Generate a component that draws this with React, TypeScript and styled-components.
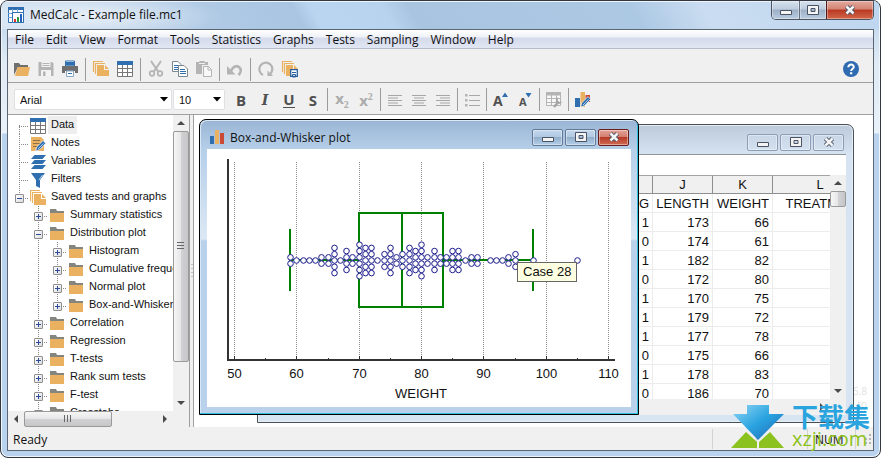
import React from 'react';
import styled, { createGlobalStyle, css } from 'styled-components';

const UI = '"Open Sans", "Noto Sans", sans-serif';
const SANS = '"Liberation Sans", Arial, sans-serif';
const ORANGE = '#eab161';
const BLUE = '#2f6fb0';
const DARK = '#6f6f6f';
const FAINT = '#b4b4b4';

const GlobalStyle = createGlobalStyle`
  *, *::before, *::after { box-sizing: border-box; }
  body { margin: 0; background: #fff; font: 12px/16px ${UI}; color: #111; }
  button, select { font: inherit; color: inherit; }
  button { border: 0; padding: 0; background: none; }
`;

/* ---------- main frame ---------- */

const Frame = styled.div`
  position: relative;
  display: flex;
  flex-direction: column;
  height: 100vh;
  min-height: 400px;
  padding: 0 6px 6px;
  overflow: hidden;
  border: 1px solid #33373f;
  border-radius: 8px;
  box-shadow: inset 0 0 0 1px #eef5fb;
  background: linear-gradient(to bottom, #b5d0ea 0, #dfeaf5 60px, #e9f1f9 132px, #b9d3ee 133px, #b9d3ee 100%);
`;

const TitleBar = styled.header`
  display: flex;
  align-items: flex-start;
  justify-content: space-between;
  height: 28px;
  flex: none;
  margin: 0 -5px;
  padding: 0 5px 0 6px;
  border-top: 1px solid #eef5fb;
  background:
    radial-gradient(ellipse 130px 22px at 90px 14px, rgba(255, 255, 255, 0.6), rgba(255, 255, 255, 0) 100%),
    linear-gradient(60deg, #d3e2f2 0, #b0cae5 24%, #a9c5e2 34%, #b9d5f0 36%, #b7d3ee 44%, #a9c4e0 47%, #acc9e4 72%, #cadcf1 80%, #bdd6ef 100%);
`;

const AppTitle = styled.h1`
  display: flex;
  align-items: center;
  gap: 6px;
  margin: 0;
  padding-top: 4px;
  font: 12px/18px ${UI};
`;

const Controls = styled.div`
  display: flex;
  height: 19px;
  margin: -1px 0 0;
  overflow: hidden;
  border: 1px solid #4c545f;
  border-top: 0;
  border-radius: 0 0 5px 5px;
`;

const ControlButton = styled.button<{ $close?: boolean }>`
  display: grid;
  place-items: center;
  width: ${p => (p.$close ? 47 : 27)}px;
  border-left: ${p => (p.$close ? '1px solid #4c1a18' : '1px solid #66707f')};
  background: ${p =>
    p.$close
      ? 'linear-gradient(#e2aaa0 0, #d48373 45%, #b93822 50%, #d2674a 100%)'
      : 'linear-gradient(#d8e2ee 0, #bccbdd 45%, #9dafc6 50%, #b9cce0 100%)'};
  box-shadow: inset 0 0 0 1px rgba(255, 255, 255, 0.35);
  &:first-child { border-left: 0; }
`;

const Client = styled.div`
  display: flex;
  flex-direction: column;
  flex: 1;
  min-height: 0;
  border: 1px solid #5a6673;
  background: #f0f0f0;
`;

const MenuBar = styled.nav`
  display: flex;
  height: 19px;
  flex: none;
  padding-left: 1px;
  border-bottom: 1px solid #b7bccb;
  background: linear-gradient(#fff 0, #eef1f7 7px, #d5daec 8px, #e1e6f4 100%);
`;

const MenuItem = styled.button`
  padding: 2px 6px 0;
  font-size: 12px;
  line-height: 16px;
`;

const Toolbar = styled.div<{ $format?: boolean }>`
  display: flex;
  align-items: center;
  flex: none;
  height: ${p => (p.$format ? 32 : 34)}px;
  padding: ${p => (p.$format ? '2px 14px 0 6px' : '7px 10px 0 2px')};
  border-bottom: 1px solid #a0a0a0;
`;

const ToolButton = styled.button<{ $end?: boolean }>`
  display: grid;
  place-items: center;
  width: 24px;
  height: 24px;
  flex: none;
  > svg { overflow: visible; }
  ${p => p.$end && css`margin-left: auto;`}
`;

const Divider = styled.span<{ $tight?: boolean }>`
  width: 1px;
  height: 23px;
  flex: none;
  margin: 0 ${p => (p.$tight ? 2 : 3)}px;
  background: #9b9b9b;
`;

const Letter = styled.span<{ $italic?: boolean; $under?: boolean; $faint?: boolean }>`
  font: bold 15px/16px "Open Sans", sans-serif;
  color: ${p => (p.$faint ? '#ababab' : '#505050')};
  ${p => p.$italic && css`font-family: "DejaVu Serif", serif; font-style: italic; font-size: 14px;`}
  ${p => p.$under && css`border-bottom: 1px solid #505050; line-height: 15px;`}
  sub, sup { font: bold 10px/10px "Liberation Serif", serif; }
`;

const Picker = styled.label<{ $wide?: boolean }>`
  display: grid;
  grid-template: 21px / 1fr;
  align-items: center;
  width: ${p => (p.$wide ? 158 : 52)}px;
  margin-right: ${p => (p.$wide ? 1 : 4)}px;
  > * { grid-area: 1 / 1; }
  > svg { justify-self: end; margin-right: 4px; pointer-events: none; }
`;

const Select = styled.select`
  width: 100%;
  height: 21px;
  padding: 0 5px;
  appearance: none;
  border: 1px solid #e0e0e4;
  border-radius: 2px;
  background: #fff;
  font: 11px/16px ${SANS};
`;

const Workspace = styled.div`
  display: flex;
  flex: 1;
  min-height: 0;
`;

/* ---------- scrollbars ---------- */

const Bar = styled.div<{ $h?: boolean }>`
  display: flex;
  flex-direction: ${p => (p.$h ? 'row' : 'column')};
  flex: none;
  ${p => (p.$h ? 'height: 16px;' : 'width: 16px;')}
  background: #f0f0f0;
`;

const Arrow = styled.button`
  display: grid;
  place-items: center;
  width: 16px;
  height: 16px;
  flex: none;
`;

const Thumb = styled.div<{ $h?: boolean; $size: string }>`
  display: grid;
  place-items: center;
  flex: none;
  ${p => (p.$h ? `width: ${p.$size};` : `height: ${p.$size};`)}
  border: 1px solid #9a9a9a;
  border-radius: 2px;
  background: linear-gradient(${p => (p.$h ? 'to bottom' : 'to right')}, #f6f6f6 0, #e6e6e8 48%, #d2d2d4 52%, #c6c6c9 100%);
`;

const Space = styled.div`flex: 1;`;

const arrows = {
  up: 'M0 6h8L4 2z',
  down: 'M0 2h8L4 6z',
  left: 'M6 0v8L2 4z',
  right: 'M2 0v8l4-4z',
};
const ArrowButton = ({ dir }: { dir: keyof typeof arrows }) => (
  <Arrow aria-label={`Scroll ${dir}`}>
    <svg width="8" height="8" viewBox="0 0 8 8"><path d={arrows[dir]} fill="#4a4a4a" /></svg>
  </Arrow>
);
const Grip = ({ h }: { h?: boolean }) => (
  <svg width="8" height="8" viewBox="0 0 8 8" stroke="#666">
    <path d={h ? 'M.5 0v7M3.5 0v7M6.5 0v7' : 'M0 .5h7M0 3.5h7M0 6.5h7'} />
  </svg>
);

/* ---------- tree ---------- */

const Sidebar = styled.aside`
  display: grid;
  grid-template: 1fr 16px / minmax(0, 1fr) 16px;
  width: 181px;
  flex: none;
  background: #fff;
`;

const Splitter = styled.div`
  display: grid;
  place-items: center;
  width: 5px;
  flex: none;
  border: solid #a0a0a0;
  border-width: 0 1px;
  background: #f0f0f0;
`;

const Tree = styled.ul`
  margin: 0;
  padding: 1px 0 0 2px;
  overflow: hidden;
  list-style: none;
  font: 11px/16px ${SANS};
`;

const Row = styled.li`
  display: flex;
  align-items: center;
  height: 18px;
  white-space: nowrap;
  > svg { flex: none; margin: 2px 2px 0 1px; }
`;

type Line = 'none' | 'full' | 'top' | 'bottom' | 'pass';
const dots = (dir: string) => `repeating-linear-gradient(${dir}, #8a8a8a 0 1px, transparent 1px 2px)`;

const Guide = styled.span<{ $line: Line }>`
  display: grid;
  place-items: center;
  width: 19px;
  height: 18px;
  padding-top: 2px;
  flex: none;
  ${({ $line }) => {
    const y = $line === 'bottom' ? '9px' : '0';
    const h = $line === 'bottom' || $line === 'top' ? '9px' : '18px';
    const v = `${dots('to bottom')} 9px ${y} / 1px ${h} no-repeat`;
    if ($line === 'none') return '';
    return $line === 'pass' ? `background: ${v};` : `background: ${v}, ${dots('to right')} 9px 10px / 10px 1px no-repeat;`;
  }}
`;

const Toggle = styled.button`
  display: grid;
  place-items: center;
  width: 9px;
  height: 9px;
  border: 1px solid #8e8e8e;
  border-radius: 1px;
  background: linear-gradient(135deg, #fff, #dcdcdc);
`;

const NodeLabel = styled.span<{ $selected?: boolean }>`
  padding: 0 3px 2px;
  line-height: 16px;
  ${p => p.$selected && css`background: #eee;`}
`;

/* ---------- documents ---------- */

const Desktop = styled.main`
  position: relative;
  flex: 1;
  overflow: hidden;
  background: #fff;
`;

const Doc = styled.section<{ $active?: boolean }>`
  position: absolute;
  display: flex;
  flex-direction: column;
  left: ${p => (p.$active ? 5 : 63)}px;
  top: ${p => (p.$active ? 4 : 9)}px;
  width: ${p => (p.$active ? 440 : 597)}px;
  height: ${p => (p.$active ? 296 : 299)}px;
  padding: 0 7px 7px;
  border: 1px solid ${p => (p.$active ? '#000' : '#4b4f55')};
  border-radius: 7px 7px 0 0;
  box-shadow: ${p => (p.$active ? 'inset -1px -1px 0 #30bfdc, inset 1px 1px 0 #d9e8f6' : 'inset 0 0 0 1px #e4eef7')};
  background: ${p =>
    p.$active
      ? 'linear-gradient(#9ab5d4 0, #b5cfe9 29px, #dce8f5 119px, #b9d1ea 121px)'
      : 'linear-gradient(#bccada 0, #d6e3f1 29px, #d7e4f2 100%)'};
`;

const DocTitle = styled.header`
  display: flex;
  align-items: center;
  height: 29px;
  flex: none;
  gap: 5px;
  padding: 5px 2px 0 2px;
  h2 { margin: 0 auto 0 0; padding-top: 2px; font: 12px/16px ${UI}; }
`;

const DocButton = styled.button<{ $tone: 'blue' | 'red' | 'idle' }>`
  display: grid;
  place-items: center;
  width: 31px;
  height: 17px;
  margin-left: -3px;
  border: 1px solid ${p => ({ blue: '#627a96', red: '#6b1f1c', idle: '#8c9db5' })[p.$tone]};
  border-radius: 2px;
  background: ${p =>
    ({
      blue: 'linear-gradient(#c3d7ec 0, #b2c9e2 45%, #93aecb 50%, #b2cee8 100%)',
      red: 'linear-gradient(#e4a298 0, #d37f70 45%, #b73a26 50%, #cf6c54 100%)',
      idle: 'linear-gradient(#c9d6e6, #d3e0ee)',
    })[p.$tone]};
  box-shadow: inset 0 0 0 1px rgba(255, 255, 255, 0.4);
`;

const DocBody = styled.div`
  display: flex;
  flex-direction: column;
  flex: 1;
  min-height: 0;
  overflow: hidden;
  background: #fff;
  > svg { display: block; width: 100%; height: auto; }
`;

const FormulaRow = styled.div`
  height: 21px;
  flex: none;
  border-top: 1px solid #909498;
`;

const SheetArea = styled.div`
  display: flex;
  flex: 1;
  min-height: 0;
`;

const SheetClip = styled.div`
  flex: 1;
  overflow: hidden;
`;

const Sheet = styled.table`
  width: 603px;
  table-layout: fixed;
  border-collapse: separate;
  border-spacing: 0;
  font: 13px/16px ${SANS};
  th, td {
    height: 19px;
    padding: 2px 3px 0;
    overflow: hidden;
    text-align: right;
    font-weight: normal;
    white-space: nowrap;
    border: solid #ececec;
    border-width: 0 1px 1px 0;
  }
  th { padding-top: 1px; text-align: center; background: #f0f0f0; border-color: #8f8f8f; border-top: 1px solid #a4a4a4; }
`;

const Col = styled.col<{ $w: number }>`width: ${p => p.$w}px;`;

const Tip = styled.div`
  position: absolute;
  left: 323px;
  top: 147px;
  padding: 0 5px;
  border: 1px solid #666;
  background: #ffffe1;
  font: 13px/18px ${SANS};
  white-space: nowrap;
`;

const FaintNote = styled.p`
  position: absolute;
  right: 6px;
  bottom: 16px;
  margin: 0;
  color: #e2e2e2;
  text-align: right;
  font-size: 10px;
  line-height: 13px;
`;

const StatusBar = styled.footer`
  display: flex;
  align-items: center;
  flex: none;
  height: 23px;
  padding: 0 2px 0 5px;
  > :first-child { flex: 1; padding-top: 2px; }
`;

const Pane = styled.span<{ $w: number }>`
  width: ${p => p.$w}px;
  height: 20px;
  padding: 3px 0 0 7px;
  border-left: 1px solid #d2d2d2;
`;

const Watermark = styled.div`
  position: absolute;
  right: 10px;
  bottom: 8px;
  display: flex;
  align-items: flex-end;
  gap: 7px;
  p { margin: 0; color: #2aa4de; font: bold 26px/26px "Noto Sans CJK SC", sans-serif; }
  p + p { color: #8cc220; font: 20px/20px ${UI}; }
`;

/* ---------- icons ---------- */

const Ico = ({ children, size = 16 }: { children: React.ReactNode; size?: number }) => (
  <svg width={size} height={size} viewBox="0 0 16 16" fill="none">{children}</svg>
);

const stackPaths = (
  <>
    <path d="M.5 11V.5H10M2.5 13V2.5H12" stroke={ORANGE} strokeWidth="1.2" />
    <path d="M4 4h7v5h5v6H4z" fill={ORANGE} />
    <path d="M12 4l4 4h-4z" fill={ORANGE} />
  </>
);

const pen = (
  <>
    <path d="M5.5 15l1.2-4L13 4.6l2.7 2.7L9.5 13.8z" fill={BLUE} stroke="#fff" strokeWidth=".7" />
    <path d="M8 13l5.5-5.6" stroke="#bdd4ea" strokeWidth=".9" />
  </>
);

const Icons = {
  open: <Ico><path d="M0 14V2h5l1.5 2H14v2H4z" fill={DARK} /><path d="M3.5 6H16l-2 9H1z" fill={ORANGE} /></Ico>,
  save: <Ico><path d="M.5 1H14l1.5 1.500V15H.5z" fill={FAINT} /><path d="M3.500 1h9v5h-9zM3 9h10v6H3z" fill="#f3f3f3" /><path d="M4.500 2.500h7M4.500 4.500h7" stroke={FAINT} /><path d="M5 10.500h2.500V15H5z" fill={FAINT} /></Ico>,
  print: <Ico><path d="M3.500 0h9v5h-9z" fill="#fff" stroke={BLUE} /><path d="M4 1h8v3.500H4z" fill={BLUE} /><path d="M0 5h16v7h-3v-2H3v2H0z" fill={DARK} /><path d="M4.500 10h7v5.500h-7z" fill="#fff" stroke="#8ba8c6" /><path d="M6 12.500h4" stroke={BLUE} /></Ico>,
  stack: <Ico>{stackPaths}</Ico>,
  stackSave: <Ico>{stackPaths}<path d="M8 8h8v8H8z" fill="#fff" /><path d="M8.700 8.700h6.600v6.600H8.700z" fill="#fff" stroke="#2a5f9c" strokeWidth="1.300" /><path d="M10 11.500h4M10.500 13.500h3V16h-3z" stroke="#2a5f9c" /></Ico>,
  table: <Ico><path d="M.5 1.500h15v14H.5z" fill="#fff" stroke="#777" /><path d="M0 0h16v4H0z" fill={BLUE} /><path d="M0 7.500h16M0 11.500h16M5.500 4v12M10.500 4v12" stroke="#777" /></Ico>,
  cut: <Ico><path d="M3 0l7.500 11M13 0L5.500 11" stroke={FAINT} strokeWidth="2" /><circle cx="4" cy="12.500" r="2.300" stroke={FAINT} strokeWidth="1.700" /><circle cx="12" cy="12.500" r="2.300" stroke={FAINT} strokeWidth="1.700" /></Ico>,
  copy: <Ico><path d="M.5.500h5.500L9 3.500v7H.5z" fill="#fff" stroke="#7d8790" /><path d="M2 4.500h5M2 6.500h5M2 8.500h5" stroke={BLUE} /><path d="M6.500 4.500h5.500l3.500 3.500v7.500h-9z" fill="#fff" stroke="#7d8790" /><path d="M8 8.500h5M8 10.500h6M8 12.500h6" stroke={BLUE} /></Ico>,
  paste: <Ico><path d="M0 1h3.500V0h5v1H12v3H6v9H0z" fill={FAINT} /><path d="M3 2.500h6" stroke="#f0f0f0" /><path d="M7.500 5.500h5l3 3v7h-8z" fill="#f8f8f8" stroke={FAINT} /><path d="M12 5v4h4" stroke={FAINT} /></Ico>,
  undo: <Ico><path d="M4 10C6 5 10 4 12.500 6.500c2 2 1.500 5-1 7.500" stroke={FAINT} strokeWidth="2.600" /><path d="M0 5v8.500h8.500z" fill={FAINT} /></Ico>,
  redo: <Ico><path d="M5 14A6.500 6.500 0 1 1 11.500 13.500" stroke={FAINT} strokeWidth="2.200" /><path d="M9.500 9.500V15H15z" fill={FAINT} /></Ico>,
  help: <Ico><circle cx="8" cy="8" r="8" fill="#2f6bb0" /><path d="M5.300 6.300C5.300 2.500 11 2.800 10.800 6 10.600 7.700 8.200 7.900 8.200 10" stroke="#fff" strokeWidth="2" /><path d="M7 11.300h2.300v2H7z" fill="#fff" /></Ico>,
  left: <Ico><path d="M1 3.500h14M1 6h10M1 8.500h14M1 11h10M1 13.500h14" stroke="#a6a6a6" /></Ico>,
  center: <Ico><path d="M1 3.500h14M3 6h10M1 8.500h14M3 11h10M1 13.500h14" stroke="#a6a6a6" /></Ico>,
  right: <Ico><path d="M1 3.500h14M5 6h10M1 8.500h14M5 11h10M1 13.500h14" stroke="#a6a6a6" /></Ico>,
  list: <Ico><path d="M5 3.500h11M5 8.500h11M5 13.500h11" stroke="#a8a8a8" /><path d="M1 2h2.500v2.500H1zM1 7h2.500v2.500H1zM1 12h2.500v2.500H1z" fill={FAINT} /></Ico>,
  tableTool: <Ico><path d="M.5.500h14v13H.5z" fill="#f7f7f7" stroke={FAINT} /><path d="M0 0h15v3.500H0z" fill={FAINT} /><path d="M0 6.500h15M0 10.500h15M5.500 2v12M10.500 2v12" stroke={FAINT} /><path d="M8 15l4.500-5" stroke="#a4a4a4" strokeWidth="2.500" /><path d="M12 5.500a3.200 3.200 0 1 0 4 4l-2.300.7-2-2z" fill="#a4a4a4" /></Ico>,
  chartPen: <Ico><path d="M0 6h5v9H0z" fill={BLUE} /><path d="M5.500 0H10v15H5.500z" fill={ORANGE} /><path d="M10.500 3h4.500v7h-4.500z" fill="#cc4a35" />{pen}</Ico>,
  notes: <Ico><path d="M1 1h10l3 3v11H1z" fill={ORANGE} /><path d="M3 4.500h7M3 7.500h8M3 10.500h5" stroke="#8b6f48" />{pen}</Ico>,
  layers: <Ico><path d="M4.500 1H16l-3.500 4H1zM4.500 6H16l-3.500 4H1zM4.500 11H16l-3.500 4H1z" fill={BLUE} /></Ico>,
  filter: <Ico><path d="M1 1h14L10 8v8l-4-2V8z" fill={BLUE} /><path d="M9 8l3.500-5" stroke="#bcd3e8" /></Ico>,
  folder: <Ico><path d="M1 1h6l1 2h7v3H1z" fill="#85857f" /><path d="M1 5h14v9H1z" fill={ORANGE} /></Ico>,
  bars: <Ico><path d="M1 7h4v8H1z" fill={BLUE} /><path d="M6 1h4v14H6z" fill={ORANGE} /><path d="M11 4h4v11h-4z" fill="#cb4a36" /></Ico>,
  app: <Ico><path d="M.5.500h15v15H.5z" fill="#fff" stroke={BLUE} /><path d="M0 0h16v3H0z" fill={BLUE} /><path d="M0 6.500h16M0 10.500h16M4.500 2v14M9.500 2v14" stroke="#6fa5dc" /><path d="M4.500 5.500h11v10h-11z" fill="#fff" stroke={BLUE} /><path d="M6 12h2v3H6z" fill="#d33" /><path d="M9 10h2v5H9z" fill="#2a9a3a" /><path d="M12 7h2v8h-2z" fill="#2860c0" /></Ico>,
};

const cross = 'M4.500 2.500l7 7M11.500 2.500l-7 7';
const glyphs = {
  minimize: <path d="M2.500 6.500h11v4h-11z" />,
  maximize: <path fillRule="evenodd" d="M2.500 1.500h11v9h-11zM6 4.500h4v3H6z" />,
  close: <><path d={cross} strokeWidth="4.500" /><path d={cross} stroke="#f4f4f4" strokeWidth="2.500" /></>,
};
type GlyphName = keyof typeof glyphs;
const Glyph = ({ name }: { name: GlyphName }) => (
  <svg width="16" height="12" viewBox="0 0 16 12" fill="#f4f4f4" stroke="#4a5364">{glyphs[name]}</svg>
);
const glyphNames: GlyphName[] = ['minimize', 'maximize', 'close'];

/* ---------- data ---------- */

const menus = ['File', 'Edit', 'View', 'Format', 'Tools', 'Statistics', 'Graphs', 'Tests', 'Sampling', 'Window', 'Help'];

type Tool = [string, keyof typeof Icons] | null;
const tools: Tool[] = [
  ['Open', 'open'], ['Save', 'save'], ['Print', 'print'], null,
  ['Contents', 'stack'], ['Data', 'table'], null,
  ['Cut', 'cut'], ['Copy', 'copy'], ['Paste', 'paste'], null,
  ['Undo', 'undo'], null, ['Repeat', 'redo'], ['Save item', 'stackSave'],
];

type TreeNode = { text: string; icon: keyof typeof Icons; guides: Line[]; sign?: '+' | '-'; selected?: boolean };
const nodes: TreeNode[] = [
  { text: 'Data', icon: 'table', guides: ['bottom'], selected: true },
  { text: 'Notes', icon: 'notes', guides: ['full'] },
  { text: 'Variables', icon: 'layers', guides: ['full'] },
  { text: 'Filters', icon: 'filter', guides: ['full'] },
  { text: 'Saved tests and graphs', icon: 'stack', guides: ['top'], sign: '-' },
  { text: 'Summary statistics', icon: 'folder', guides: ['none', 'full'], sign: '+' },
  { text: 'Distribution plot', icon: 'folder', guides: ['none', 'full'], sign: '-' },
  { text: 'Histogram', icon: 'folder', guides: ['none', 'pass', 'full'], sign: '+' },
  { text: 'Cumulative frequency', icon: 'folder', guides: ['none', 'pass', 'full'], sign: '+' },
  { text: 'Normal plot', icon: 'folder', guides: ['none', 'pass', 'full'], sign: '+' },
  { text: 'Box-and-Whisker', icon: 'folder', guides: ['none', 'pass', 'top'], sign: '+' },
  ...['Correlation', 'Regression', 'T-tests', 'Rank sum tests', 'F-test', 'Crosstabs'].map(
    (text): TreeNode => ({ text, icon: 'folder', guides: ['none', 'full'], sign: '+' }),
  ),
];

const rows = [
  [1, 173, 66], [0, 174, 61], [1, 182, 82], [0, 172, 80], [1, 170, 75],
  [1, 179, 72], [1, 177, 78], [0, 175, 66], [1, 178, 83], [0, 186, 70],
];

const counts: [number, number][] = [
  [59, 2], [60, 1], [61, 1], [62, 1], [63, 1], [64, 2], [65, 2], [66, 5], [67, 1], [68, 4], [69, 2],
  [70, 6], [71, 5], [72, 5], [73, 1], [74, 3], [75, 5], [76, 2], [77, 3], [78, 5], [79, 4], [80, 6],
  [81, 2], [82, 4], [83, 2], [84, 2], [85, 4], [86, 4], [87, 1], [88, 2], [89, 2], [91, 1], [92, 1],
  [93, 1], [94, 2], [95, 3], [98, 1], [105, 1],
];

/* ---------- pieces ---------- */

const scaleX = (v: number) => Math.round(27 + (v - 50) * 6.235) + 0.5;

const BoxPlot = () => (
  <svg viewBox="0 0 424 258" role="img" aria-label="Box-and-Whisker plot of WEIGHT" fontFamily="Liberation Sans, Arial, sans-serif" fontSize="13" textAnchor="middle">
    {[50, 60, 70, 80, 90, 100, 110].map(v => (
      <g key={v}>
        <path d={`M${scaleX(v)} 13V208`} stroke="#8c8c8c" strokeDasharray="1 1" />
        <path d={`M${scaleX(v)} 207v3`} stroke="#333" />
        {v < 110 && <path d={`M${scaleX(v + 5)} 209v2`} stroke="#333" />}
        <text x={scaleX(v)} y="229" fill="#111">{v}</text>
      </g>
    ))}
    <path d="M21 10v201h387" fill="none" stroke="#333" strokeWidth="2" />
    <text x="214" y="249" fill="#111">WEIGHT</text>
    <g fill="none" stroke="#008000" strokeWidth="2">
      <path d="M152 64h84v94h-84zM195 64v94M83 80v62M326 80v62M83 111h69M236 111h90" />
    </g>
    <g fill="#fff" stroke="#1a1a8c">
      {counts.map(([v, n]) =>
        Array.from({ length: n }, (_, i) => (
          <circle key={`${v}-${i}`} cx={scaleX(v)} cy={111.5 + (i - (n - 1) / 2) * 6.3} r="2.8" />
        )),
      )}
    </g>
  </svg>
);

const TreeView = () => (
  <Tree>
    {nodes.map(n => (
      <Row key={n.text}>
        {n.guides.map((line, i) => (
          <Guide key={i} $line={line}>
            {n.sign && i === n.guides.length - 1 && (
              <Toggle aria-label={`Toggle ${n.text}`}>
                <svg width="5" height="5" viewBox="0 0 5 5" stroke="#2c4b9b">
                  <path d={n.sign === '+' ? 'M0 2.5h5M2.5 0v5' : 'M0 2.5h5'} />
                </svg>
              </Toggle>
            )}
          </Guide>
        ))}
        {Icons[n.icon]}
        <NodeLabel $selected={n.selected}>{n.text}</NodeLabel>
      </Row>
    ))}
  </Tree>
);

const DropArrow = () => (
  <svg width="8" height="5" viewBox="0 0 8 5"><path d="M0 0h8L4 4.500z" fill="#000" /></svg>
);

const DocControls = ({ active }: { active?: boolean }) => (
  <>
    {glyphNames.map(name => (
      <DocButton key={name} aria-label={name} $tone={!active ? 'idle' : name === 'close' ? 'red' : 'blue'}>
        <Glyph name={name} />
      </DocButton>
    ))}
  </>
);

const IconTool = ({ label, icon }: { label: string; icon: keyof typeof Icons }) => (
  <ToolButton aria-label={label}>{Icons[icon]}</ToolButton>
);

export default function App() {
  return (
    <Frame>
      <GlobalStyle />
      <TitleBar>
        <AppTitle>{Icons.app}MedCalc - Example file.mc1</AppTitle>
        <Controls>
          {glyphNames.map(name => (
            <ControlButton key={name} aria-label={name} $close={name === 'close'}><Glyph name={name} /></ControlButton>
          ))}
        </Controls>
      </TitleBar>
      <Client>
        <MenuBar>{menus.map(m => <MenuItem key={m}>{m}</MenuItem>)}</MenuBar>
        <Toolbar>
          {tools.map((t, i) => (t ? <IconTool key={i} label={t[0]} icon={t[1]} /> : <Divider key={i} />))}
          <ToolButton $end aria-label="Help">{Icons.help}</ToolButton>
        </Toolbar>
        <Toolbar $format>
          <Picker $wide><Select aria-label="Font"><option>Arial</option></Select><DropArrow /></Picker>
          <Picker><Select aria-label="Font size"><option>10</option></Select><DropArrow /></Picker>
          <ToolButton><Letter>B</Letter></ToolButton>
          <ToolButton><Letter $italic>I</Letter></ToolButton>
          <ToolButton><Letter $under>U</Letter></ToolButton>
          <ToolButton><Letter>S</Letter></ToolButton>
          <Divider $tight />
          <ToolButton><Letter $faint>x<sub>2</sub></Letter></ToolButton>
          <ToolButton><Letter $faint>x<sup>2</sup></Letter></ToolButton>
          <Divider $tight />
          <IconTool label="Align left" icon="left" />
          <IconTool label="Align center" icon="center" />
          <IconTool label="Align right" icon="right" />
          <Divider $tight />
          <IconTool label="List" icon="list" />
          <Divider $tight />
          <ToolButton aria-label="Larger text">
            <Ico><text x="0" y="14" fontFamily="Open Sans" fontWeight="bold" fontSize="14" fill="#505050">A</text><path d="M9 5l3-4.500L15 5z" fill={BLUE} /></Ico>
          </ToolButton>
          <ToolButton aria-label="Smaller text">
            <Ico><text x="2" y="14" fontFamily="Open Sans" fontWeight="bold" fontSize="11" fill="#505050">A</text><path d="M8.500 1L11.500 5.500 14.500 1z" fill={BLUE} /></Ico>
          </ToolButton>
          <Divider $tight />
          <IconTool label="Table format" icon="tableTool" />
          <Divider $tight />
          <IconTool label="Graph format" icon="chartPen" />
        </Toolbar>
        <Workspace>
          <Sidebar>
            <TreeView />
            <Bar>
              <ArrowButton dir="up" />
              <Thumb $size="78%"><Grip /></Thumb>
              <Space />
              <ArrowButton dir="down" />
            </Bar>
            <Bar $h>
              <ArrowButton dir="left" />
              <Thumb $h $size="88px"><Grip h /></Thumb>
              <Space />
              <ArrowButton dir="right" />
            </Bar>
            <Bar $h />
          </Sidebar>
          <Splitter>
            <svg width="2" height="14" viewBox="0 0 2 14"><path d="M1 0v14" stroke="#999" strokeDasharray="1 3" /></svg>
          </Splitter>
          <Desktop>
            <FaintNote>5.8<br />to</FaintNote>
            <Doc>
              <DocTitle><h2 /><DocControls /></DocTitle>
              <DocBody>
                <FormulaRow />
                <SheetArea>
                  <SheetClip>
                    <Sheet>
                      <colgroup><Col $w={388} /><Col $w={60} /><Col $w={60} /><Col $w={95} /></colgroup>
                      <thead><tr><th /><th>J</th><th>K</th><th>L</th></tr></thead>
                      <tbody>
                        <tr><td>G</td><td>LENGTH</td><td>WEIGHT</td><td>TREATMENT</td></tr>
                        {rows.map(r => <tr key={r[1]}>{r.map((c, i) => <td key={i}>{c}</td>)}<td /></tr>)}
                      </tbody>
                    </Sheet>
                  </SheetClip>
                  <Bar><ArrowButton dir="up" /><Thumb $size="16px" /><Space /><ArrowButton dir="down" /></Bar>
                </SheetArea>
                <Bar $h><Space /><ArrowButton dir="right" /><Bar /></Bar>
              </DocBody>
            </Doc>
            <Doc $active>
              <DocTitle>{Icons.bars}<h2>Box-and-Whisker plot</h2><DocControls active /></DocTitle>
              <DocBody><BoxPlot /></DocBody>
            </Doc>
            <Tip role="tooltip">Case 28</Tip>
          </Desktop>
        </Workspace>
        <StatusBar>
          <span>Ready</span>
          <Pane $w={44} /><Pane $w={51} /><Pane $w={48}>NUM</Pane><Pane $w={16}>
            <svg width="8" height="12" viewBox="0 0 8 12"><path d="M6 2h2v2H6zM6 6h2v2H6zM6 10h2v2H6zM2 6h2v2H2zM2 10h2v2H2z" fill="#b5b5b5" /></svg>
          </Pane>
        </StatusBar>
      </Client>
      <Watermark>
        <svg width="54" height="44" viewBox="0 0 54 44">
          <defs><linearGradient id="arrowFill" x1="0" y1="0" x2="1" y2="1"><stop offset="0" stopColor="#8fd6f5" /><stop offset=".5" stopColor="#29a3e0" /><stop offset="1" stopColor="#2363b0" /></linearGradient></defs>
          <path d="M16 0h22v9h15L27 35 2 9h14z" fill="url(#arrowFill)" />
          <path d="M0 43l15-16 11 10v6zM28 43v-6l11-10 14 16z" fill="#8cc220" />
        </svg>
        <div><p>下载集</p><p>xzji.com</p></div>
      </Watermark>
    </Frame>
  );
}
